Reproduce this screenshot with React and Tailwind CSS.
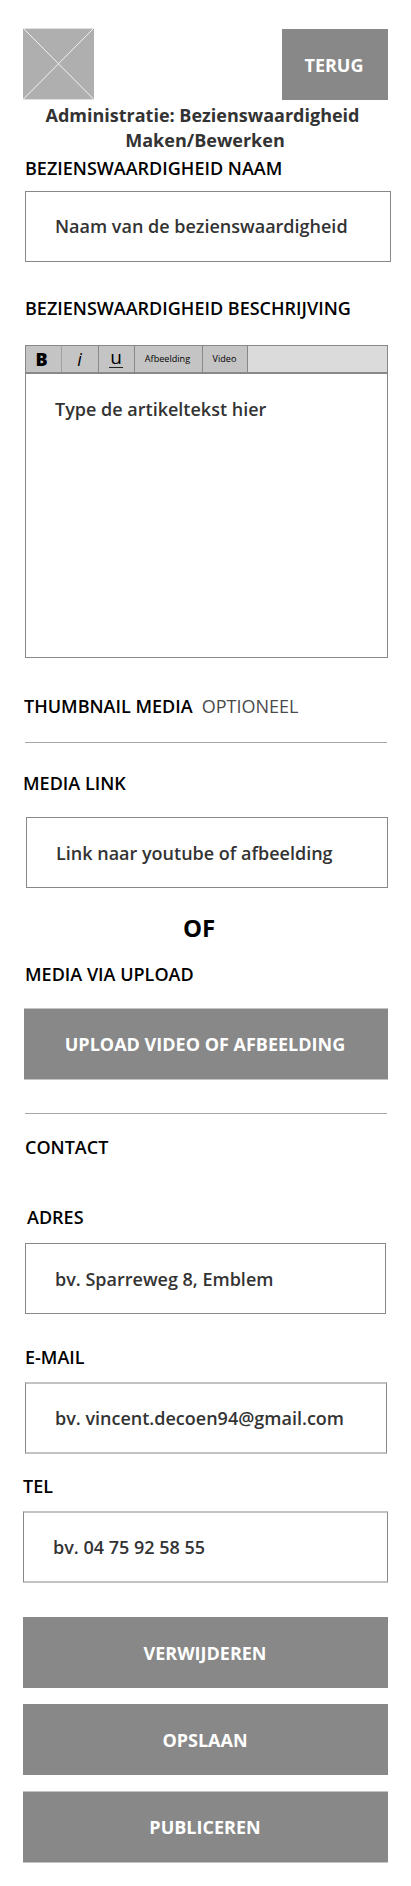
const label = 'block text-lg leading-6 font-semibold text-black whitespace-nowrap';

function Label({ className, children }) {
  return <h2 className={`${label} ${className}`}>{children}</h2>;
}

function Field({ className, children }) {
  return (
    <div className={`flex items-center border-[#888] text-lg leading-6 font-semibold text-[#333] whitespace-nowrap ${className}`}>
      {children}
    </div>
  );
}

function Button({ className, children }) {
  return (
    <button className={`flex items-center justify-center bg-[#888] text-lg leading-6 font-bold text-white whitespace-nowrap ${className}`}>
      {children}
    </button>
  );
}

function Toolbar() {
  return (
    <div className="flex h-7 border-b-2 border-[#888] bg-[#dbdbdb] text-black">
      <div className="flex w-9 items-center justify-center border-r border-[#a0a0a0] bg-[#c4c4c4] pr-1 text-lg leading-6 font-extrabold">B</div>
      <div className="flex w-[37px] items-center justify-center border-r border-[#888] bg-[#c4c4c4] pr-px text-lg leading-6 italic">i</div>
      <div className="flex w-9 items-start justify-center border-r border-[#888] bg-[#c4c4c4] pr-px">
        <span className="h-[22px] w-[14px] border-b border-[#222] text-center text-[19px] leading-[22px]">u</span>
      </div>
      <div className="flex w-[68px] items-center justify-center border-r border-[#888] bg-[#c4c4c4] pr-0.5 text-[9.1px] leading-3">Afbeelding</div>
      <div className="flex w-[45px] items-center justify-center border-r border-[#888] bg-[#c4c4c4] pr-px text-[9.1px] leading-3">Video</div>
    </div>
  );
}

export default function App() {
  return (
    <main className="flex h-[1886px] w-[411px] flex-col items-start overflow-hidden bg-white pt-7 font-['Open_Sans',sans-serif]">
      <header className="flex h-[72px] w-full items-start justify-between pr-[23px] pl-[23px]">
        <svg width="71" height="72" viewBox="0 0 71 72" aria-hidden="true">
          <rect y="0.5" width="71" height="71" fill="#afafaf" />
          <path d="M0 0.5H71M0 71.5H71" stroke="#e0e0e0" strokeWidth="1" />
          <path d="M0.5 0.5L70.5 71M70.5 0.5L0.5 71" stroke="#f2f2f2" strokeWidth="1" />
        </svg>
        <Button className="mt-px h-[71px] w-[106px] pr-0.5">TERUG</Button>
      </header>

      <h1 className="mt-[3px] flex w-full flex-col items-center text-lg leading-[25px] font-bold text-[#333]">
        <span className="pr-1.5">Administratie: Bezienswaardigheid</span>
        <span className="pr-px">Maken/Bewerken</span>
      </h1>

      <Label className="mt-[3px] ml-[25px]">BEZIENSWAARDIGHEID NAAM</Label>
      <Field className="mt-[11px] ml-[25px] h-[71px] w-[366px] border pb-px pl-[29px]">Naam van de bezienswaardigheid</Field>

      <Label className="mt-[34px] ml-[25px]">BEZIENSWAARDIGHEID BESCHRIJVING</Label>
      <section className="mt-[25px] ml-[25px] h-[313px] w-[363px] border border-[#888]">
        <Toolbar />
        <p className="pt-[23px] pl-[29px] text-lg leading-6 font-semibold text-[#333]">Type de artikeltekst hier</p>
      </section>

      <Label className="mt-9 ml-6">
        THUMBNAIL MEDIA<span className="ml-[9px] font-normal text-[#4a4a4a]">OPTIONEEL</span>
      </Label>
      <hr className="mt-6 ml-[25px] w-[362px] border-t border-[#a8a8a8]" />

      <Label className="mt-7 ml-[23px]">MEDIA LINK</Label>
      <Field className="mt-[22px] ml-[26px] h-[71px] w-[362px] border pl-[29px]">Link naar youtube of afbeelding</Field>

      <div className="mt-6 ml-[183px] text-2xl leading-8 font-bold text-black">OF</div>

      <Label className="mt-[18px] ml-[25px]">MEDIA VIA UPLOAD</Label>
      <Button className="mt-[22px] ml-6 h-[72px] w-[364px] border-y border-[#c3c3c3] pr-0.5">UPLOAD VIDEO OF AFBEELDING</Button>
      <hr className="mt-[33px] ml-[25px] w-[362px] border-t border-[#a8a8a8]" />

      <Label className="mt-[21px] ml-[25px]">CONTACT</Label>

      <Label className="mt-[46px] ml-[27px]">ADRES</Label>
      <Field className="mt-[14px] ml-[25px] h-[71px] w-[361px] border pl-[29px]">bv. Sparreweg 8, Emblem</Field>

      <Label className="mt-[31px] ml-[25px]">E-MAIL</Label>
      <Field className="mt-[13px] ml-[25px] h-[72px] w-[362px] border-x border-y-2 border-y-[#c3c3c3] pl-[29px]">bv. vincent.decoen94@gmail.com</Field>

      <Label className="mt-5 ml-[23px]">TEL</Label>
      <Field className="mt-[13px] ml-[23px] h-[72px] w-[365px] border-x border-y-2 border-y-[#c3c3c3] pl-[29px]">bv. 04 75 92 58 55</Field>

      <Button className="mt-[34px] ml-[23px] h-[71px] w-[365px] pr-px">VERWIJDEREN</Button>
      <Button className="mt-4 ml-[23px] h-[71px] w-[365px] pr-px">OPSLAAN</Button>
      <Button className="mt-4 ml-[23px] h-[72px] w-[365px] border-y border-[#c3c3c3] pr-px">PUBLICEREN</Button>
    </main>
  );
}
